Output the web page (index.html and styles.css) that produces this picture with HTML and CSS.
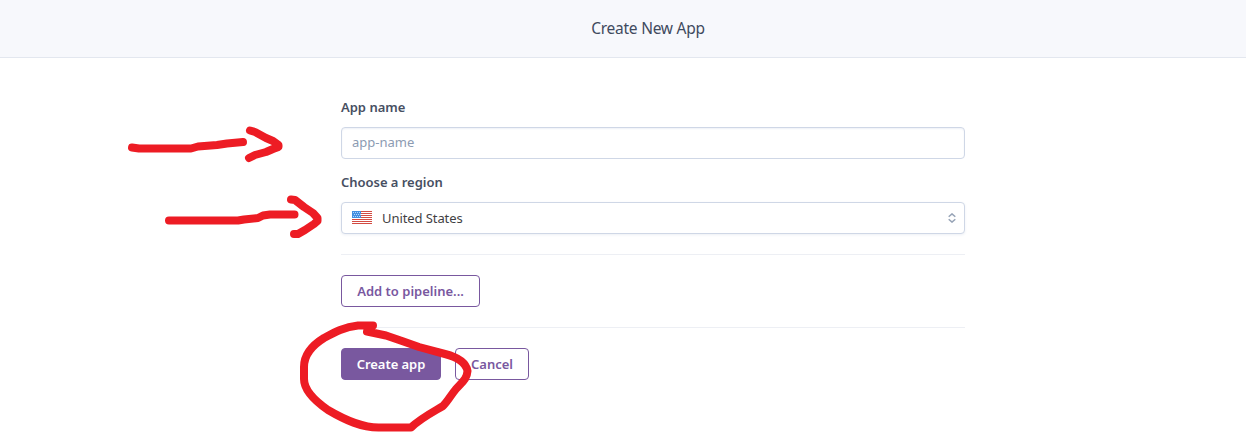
FILE: index.html
```html
<!DOCTYPE html>
<html lang="en">
<head>
<meta charset="utf-8">
<title>Create New App</title>
<link rel="stylesheet" href="styles.css">
</head>
<body>
<header class="header"><h1 class="title">Create New App</h1></header>
<main class="form">
  <label class="label" for="name">App name</label>
  <input class="field input" id="name" type="text" placeholder="app-name">
  <div class="label region-label">Choose a region</div>
  <div class="field select">
    <svg class="flag" width="20" height="13" viewBox="0 0 20 13">
      <rect width="20" height="13" rx="1" fill="#fff"/>
      <path d="M0 .5H20M0 2.5H20M0 4.5H20M0 6.5H20M0 8.5H20M0 10.5H20M0 12.5H20" stroke="#d34b43"/>
      <rect width="9" height="7" fill="#438fe0"/>
      <path d="M1 1.5H9M2 3.5H9M1 5.5H9" stroke="#b5d6fa" stroke-dasharray="1 1"/>
    </svg>
    <span class="country">United States</span>
    <svg class="chevrons" width="8" height="10" viewBox="0 0 8 10" fill="none" stroke="#96a3b6" stroke-width="1.5"><path d="M.7 3.7 4 .9 7.3 3.7M.7 6.3 4 9.1 7.3 6.3"/></svg>
  </div>
  <div class="section"><button class="button pipeline"><span>Add to pipeline...</span></button></div>
  <div class="section actions">
    <button class="button primary"><span>Create app</span></button>
    <button class="button cancel"><span>Cancel</span></button>
  </div>
</main>
<svg class="marks" width="1246" height="442" viewBox="0 0 1246 442" fill="none" stroke="#ed1c24" stroke-width="8" stroke-linecap="round" stroke-linejoin="round">
  <path d="M132 147.500L139 148.500H191L198 146.500 217 145 227 143.500 243 142"/>
  <path d="M250 130.500 255 132 266 138 273 141 278.500 145V147L273 149 266 152 255 155 249 158"/>
  <path d="M169 220.500H238L244 219.500 258 218 263 215.500 270 214.500H294.500"/>
  <path d="M291 199.500 295 200 304 207 313 213 317.500 218V221L314 224 305 230 298 234H294"/>
  <path d="M373 325.500H358C344 327 335 332 324 338C311 346 304 355 304 367V379C304 391 315 401 328 410C345 420 362 428 380 427.500H411C421 418 433 412 443 406C448 401 451 395 456 389C462 382 467 379 467.500 371C466 363 457 357 445 354L419 347 402 341 386 335.500 367 331.500"/>
</svg>
</body>
</html>
```
FILE: styles.css
```css
* { box-sizing: border-box; }
body {
  margin: 0;
  height: 442px;
  overflow: hidden;
  background: #fff;
  color: #3f3f44;
  font: 13px/20px "Noto Sans", "Open Sans", sans-serif;
}
.header {
  display: flex;
  align-items: center;
  justify-content: center;
  height: 58px;
  padding: 0 0 2px 50px;
  background: #f7f8fc;
  border-bottom: 1px solid #e3e7ef;
}
.title {
  margin: 0;
  color: #3f4a5e;
  font-size: 15.5px;
  font-weight: 400;
  letter-spacing: -.25px;
  white-space: nowrap;
}
.form { width: 624px; margin: 39px 0 0 341px; }
.label {
  display: block;
  margin-bottom: 10px;
  color: #474f62;
  font-weight: 600;
}
.region-label { margin-top: 13px; margin-bottom: 10px; letter-spacing: -.03px; }
.field {
  display: flex;
  align-items: center;
  width: 100%;
  height: 32px;
  padding: 0 8px 0 10px;
  border: 1px solid #cfd7e6;
  border-radius: 4px;
  background: #fff;
  font: inherit;
}
.input { box-shadow: inset 0 1px 2px #eef1f7; padding-bottom: 2px; }
.input::placeholder { color: #8c9bb2; opacity: 1; }
.select { box-shadow: 0 1px 3px #edf0f5; }
.country { margin-left: 10px; letter-spacing: -.08px; }
.flag { margin-top: -1px; }
.chevrons { margin-left: auto; }
.section {
  margin-top: 20px;
  padding-top: 20px;
  border-top: 1px solid #edeff4;
}
.actions { display: flex; gap: 14px; }
.button {
  display: flex;
  align-items: center;
  justify-content: center;
  height: 32px;
  padding: 0;
  border: 1px solid #79589f;
  border-radius: 4px;
  background: #fff;
  color: #79589f;
  font: 600 13px/20px "Noto Sans", "Open Sans", sans-serif;
  white-space: nowrap;
}
.pipeline { width: 139px; }
.primary { width: 100px; background: #79589f; color: #fff; letter-spacing: -.05px; }
.cancel { width: 74px; }
.marks { position: absolute; top: 0; left: 0; pointer-events: none; }
```
